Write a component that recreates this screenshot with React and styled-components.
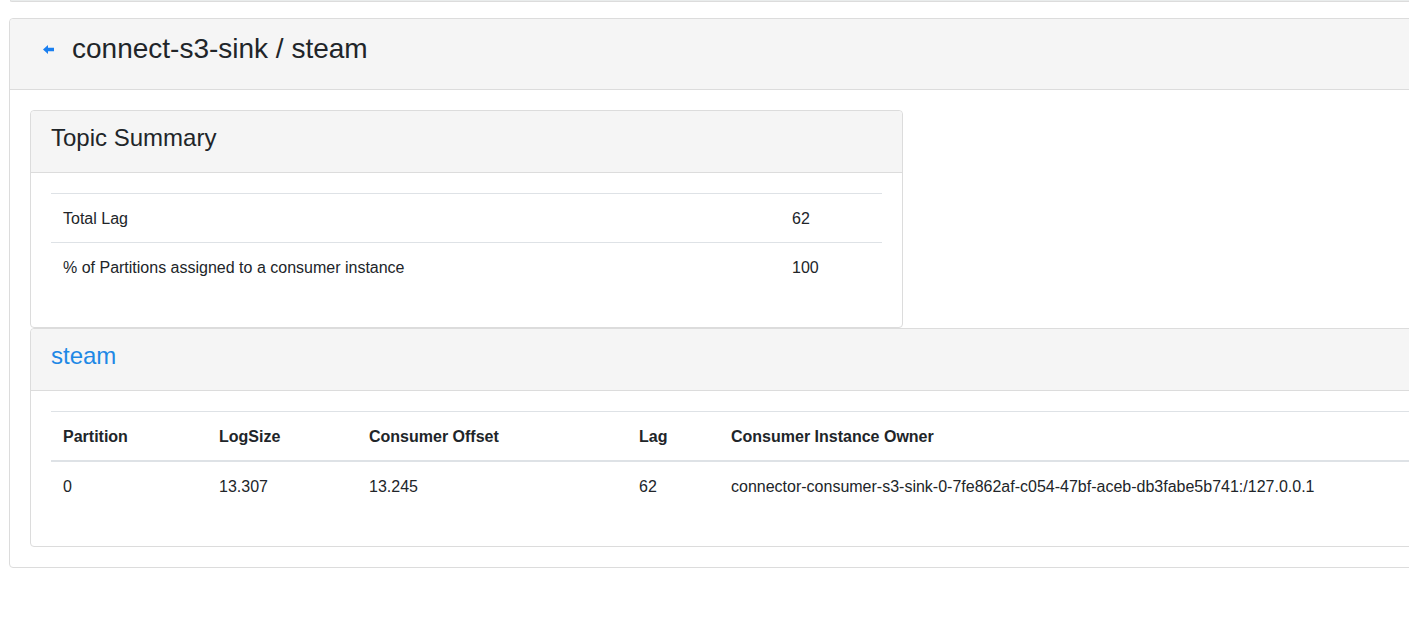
import React from 'react';
import styled, { createGlobalStyle } from 'styled-components';

const GlobalStyle = createGlobalStyle`
  html, body {
    margin: 0;
    padding: 0;
    overflow: hidden;
    background: #ffffff;
  }
  body {
    font-family: 'Liberation Sans', Arial, sans-serif;
    font-size: 16px;
    line-height: 1.5;
    color: #212529;
  }
`;

const Page = styled.div`
  width: 1460px;
`;

const PrevCardEdge = styled.div`
  height: 1px;
  margin-left: 10px;
  background: #e9ecec;
  border-left: 1px solid #dcdcdc;
  border-bottom: 1px solid #dcdcdc;
  border-bottom-left-radius: 4px;
`;

const Card = styled.div`
  background: #ffffff;
  border: 1px solid #dcdcdc;
  border-radius: 4px;
  width: ${p => p.width || 'auto'};
  margin: ${p => p.margin || '0'};
  box-sizing: border-box;
`;

const CardHeader = styled.div`
  display: flex;
  align-items: center;
  background: #f5f5f5;
  border-bottom: 1px solid #dcdcdc;
  border-radius: 4px 4px 0 0;
  box-sizing: border-box;
  height: ${p => p.height}px;
  padding: 0 ${p => p.pad}px ${p => p.lift}px;
`;

const CardBody = styled.div`
  padding: 20px;
  display: flex;
  flex-direction: column;
`;

const BackLink = styled.a`
  display: flex;
  align-items: center;
  margin-left: 2px;
  margin-right: 18px;
  margin-top: 2px;
  cursor: pointer;
`;

const PageTitle = styled.h2`
  margin: 0;
  font-size: 28px;
  font-weight: 400;
  line-height: 1.2;
  color: #212529;
`;

const CardTitle = styled.h3`
  margin: 0;
  font-size: 24px;
  font-weight: 400;
  line-height: 1.2;
  color: ${p => (p.link ? '#1e88e5' : '#212529')};
`;

const Table = styled.table`
  width: 100%;
  border-collapse: collapse;
  margin-bottom: 16px;
  table-layout: fixed;
`;

const Th = styled.th`
  text-align: left;
  font-weight: 700;
  padding: 13px 12px 11px;
  border-top: 1px solid #dee2e6;
  border-bottom: 2px solid #dee2e6;
  width: ${p => p.w || 'auto'};
  white-space: nowrap;
`;

const Td = styled.td`
  padding: 13px 12px 11px;
  border-top: 1px solid #dee2e6;
  width: ${p => p.w || 'auto'};
  white-space: nowrap;
`;

const ArrowLeft = () => (
  <svg width="11" height="9" viewBox="0 0 11 9">
    <path d="M0 4.5 L5 0 L5 2.8 L11 2.8 L11 6.2 L5 6.2 L5 9 Z" fill="#1a7ff0" />
  </svg>
);

const summary = [
  { label: 'Total Lag', value: '62' },
  { label: '% of Partitions assigned to a consumer instance', value: '100' },
];

const partitions = [
  {
    partition: '0',
    logSize: '13.307',
    offset: '13.245',
    lag: '62',
    owner: 'connector-consumer-s3-sink-0-7fe862af-c054-47bf-aceb-db3fabe5b741:/127.0.0.1',
  },
];

export default function App() {
  return (
    <Page>
      <GlobalStyle />
      <PrevCardEdge />
      <Card margin="16px 0 0 9px">
        <CardHeader height={71} pad={31} lift={11}>
          <BackLink>
            <ArrowLeft />
          </BackLink>
          <PageTitle>connect-s3-sink / steam</PageTitle>
        </CardHeader>
        <CardBody>
          <Card width="873px">
            <CardHeader height={62} pad={20} lift={6}>
              <CardTitle>Topic Summary</CardTitle>
            </CardHeader>
            <CardBody>
              <Table>
                <tbody>
                  {summary.map(row => (
                    <tr key={row.label}>
                      <Td w="705px">{row.label}</Td>
                      <Td>{row.value}</Td>
                    </tr>
                  ))}
                </tbody>
              </Table>
            </CardBody>
          </Card>
          <Card>
            <CardHeader height={62} pad={20} lift={6}>
              <CardTitle link>steam</CardTitle>
            </CardHeader>
            <CardBody>
              <Table>
                <thead>
                  <tr>
                    <Th w="132px">Partition</Th>
                    <Th w="126px">LogSize</Th>
                    <Th w="246px">Consumer Offset</Th>
                    <Th w="68px">Lag</Th>
                    <Th>Consumer Instance Owner</Th>
                  </tr>
                </thead>
                <tbody>
                  {partitions.map(p => (
                    <tr key={p.partition}>
                      <Td>{p.partition}</Td>
                      <Td>{p.logSize}</Td>
                      <Td>{p.offset}</Td>
                      <Td>{p.lag}</Td>
                      <Td>{p.owner}</Td>
                    </tr>
                  ))}
                </tbody>
              </Table>
            </CardBody>
          </Card>
        </CardBody>
      </Card>
    </Page>
  );
}
